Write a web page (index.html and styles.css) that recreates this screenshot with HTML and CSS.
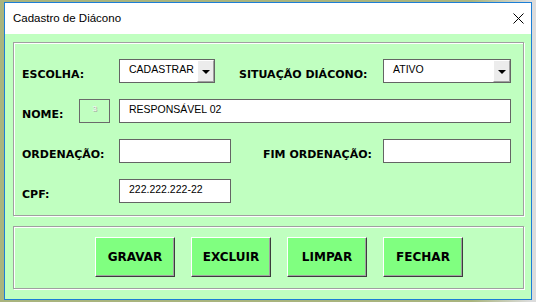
FILE: index.html
```html
<html>
<head>
<title>Cadastro de Diácono</title>
<meta charset="utf-8">
<link rel="stylesheet" href="styles.css">
</head>
<body>
    <div class="window">
        <div class="titlebar">
            <span class="title">Cadastro de Diácono</span>
            <svg class="close" width="11" height="11" viewBox="0 0 11 11">
                <path d="M0.5 0.5 L10.5 10.5 M10.5 0.5 L0.5 10.5" stroke="#000" stroke-width="1" fill="none"/>
            </svg>
        </div>
        <div class="client">
            <!-- upper frame: the fields -->
            <div class="frame fields">
                <div class="row">
                    <span class="label wide">ESCOLHA:</span>
                    <div class="box combo w96"><span class="text">CADASTRAR</span><span class="dropbtn"><i class="arrow"></i></span></div>
                    <span class="label situacao">SITUAÇÃO DIÁCONO:</span>
                    <div class="box combo w128"><span class="text">ATIVO</span><span class="dropbtn"><i class="arrow"></i></span></div>
                </div>
                <div class="row">
                    <span class="label nome">NOME:</span>
                    <div class="idbox">3</div>
                    <div class="box w392"><span class="text">RESPONSÁVEL 02</span></div>
                </div>
                <div class="row">
                    <span class="label wide">ORDENAÇÃO:</span>
                    <div class="box w112"></div>
                    <span class="label fim">FIM ORDENAÇÃO:</span>
                    <div class="box w128"></div>
                </div>
                <div class="row">
                    <span class="label wide">CPF:</span>
                    <div class="box w112"><span class="text">222.222.222-22</span></div>
                </div>
            </div>
            <!-- lower frame: the command buttons -->
            <div class="frame buttons">
                <button type="button" class="cmd">GRAVAR</button>
                <button type="button" class="cmd">EXCLUIR</button>
                <button type="button" class="cmd">LIMPAR</button>
                <button type="button" class="cmd">FECHAR</button>
            </div>
        </div>
    </div>
</body>
</html>
```

FILE: styles.css
```css
* {box-sizing: border-box;}
body {
    margin: 0;
    background: linear-gradient(to right, #a9b47e 0, #a9b47e 88%, #dcdcdc 99%);
    font-family: "Liberation Sans", Arial, sans-serif;}
.window {
    margin: 2px 0 0 4px;
    width: 528px;
    height: 298px;
    border: 1px solid #1c7ed6;
    background-color: #c0ffc0;}
.titlebar {
    height: 31px;
    background-color: #fff;
    display: flex;
    align-items: center;
    justify-content: space-between;
    padding: 0 7px 1px 8px;}
.title {font-size: 11.5px; color: #000;}
.close {display: block; margin-top: 1px;}
.client {padding: 8px 0 0 8px;}

/* etched frame like a windows groupbox */
.frame {
    width: 511px;
    border: 1px solid #a0a0a0;
    box-shadow: inset 1px 1px 0 #fff, 1px 1px 0 #fff;}
.fields {
    height: 174px;
    padding: 16px 0 0 8px;
    display: flex;
    flex-direction: column;
    gap: 16px;}
.buttons {
    height: 63px;
    margin-top: 10px;
    padding: 10px 0 0 81px;
    display: flex;
    gap: 16px;}

.row {display: flex; height: 24px;}
.label {
    font: bold 11px "DejaVu Sans", sans-serif;
    line-height: 13px;
    padding-top: 9px;
    color: #000;
    white-space: nowrap;}
.wide {width: 97px;}
.nome {width: 57px;}
.situacao {width: 144px; margin-left: 24px;}
.fim {width: 120px; margin-left: 32px;}

.box {
    height: 24px;
    border: 1px solid #646464;
    background-color: #fff;
    display: flex;}
.w96 {width: 96px;}
.w112 {width: 112px;}
.w128 {width: 128px;}
.w392 {width: 392px;}
.text {
    flex: 1;
    font-size: 10.5px;
    line-height: 12px;
    padding: 3px 0 0 9px;
    color: #000;
    white-space: nowrap;}
.dropbtn {
    width: 17px;
    height: 22px;
    border: 1px solid;
    border-color: #fff #a0a0a0 #a0a0a0 #fff;
    background-color: #ececec;
    display: flex;
    align-items: center;
    justify-content: center;}
.arrow {
    width: 0; height: 0;
    border-left: 4px solid transparent;
    border-right: 4px solid transparent;
    border-top: 4px solid #000;
    margin-top: 1px;}
.idbox {
    width: 31px;
    height: 24px;
    margin-right: 9px;
    border: 1px solid #6a6a6a;
    font-size: 8px;
    color: #f4f4f4;
    text-shadow: 1px 1px 0 #a8a8a8;
    text-align: center;
    padding-top: 4px;}

.cmd {
    width: 80px;
    height: 40px;
    padding: 0;
    border: 1px solid;
    border-color: #fff #3c3c3c #3c3c3c #fff;
    box-shadow: inset -1px -1px 0 #a0a0a0;
    background-color: #80ff80;
    font: bold 12px "DejaVu Sans", sans-serif;
    color: #000;}
```
